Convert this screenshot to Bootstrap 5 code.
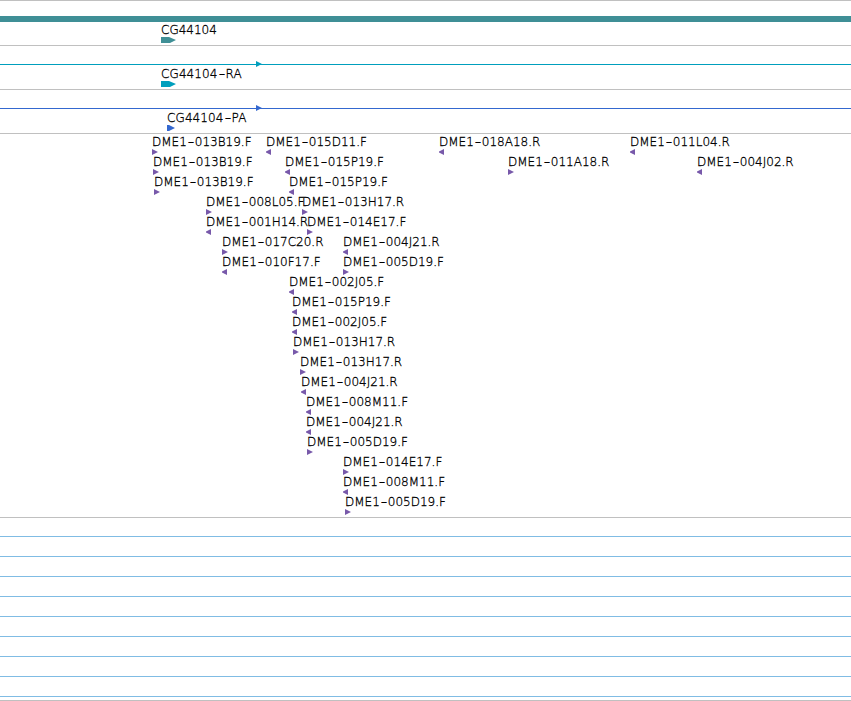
<!DOCTYPE html>
<html lang="en">
<head>
  <meta charset="UTF-8" />
  <meta name="viewport" content="width=device-width, initial-scale=1.0"/>
  <title>CG44104 | Genome Tracks</title>
  <link href="https://cdn.jsdelivr.net/npm/bootstrap@5.3.0/dist/css/bootstrap.min.css" rel="stylesheet"/>
  <style>
    body {
      font-family: "DejaVu Sans", sans-serif;
      font-size: 12px;
      font-weight: 200;
      line-height: 14px;
      color: #000;
      background-color: #fff;
      -webkit-text-stroke: 0.3px #000;
    }
    .track {
      border-top: 1px solid #c0c0c0;
    }
    .track-top {
      height: 45px;
      padding-top: 15px;
    }
    .track-model {
      height: 44px;
      padding-top: 15px;
    }
    .track-model .feature {
      letter-spacing: 0.1px;
    }
    .track-reads {
      height: 384px;
    }
    .track-empty {
      height: 183px;
      padding-top: 18px;
    }
    .gene-bar {
      height: 6px;
      background-color: #3f8f96;
    }
    .span-line {
      height: 5px;
      padding-top: 3px;
    }
    .span-line::before {
      content: "";
      display: block;
      height: 1px;
      background-color: currentColor;
    }
    .span-arrow {
      left: 256px;
      top: 0;
    }
    .lane {
      height: 20px;
    }
    .feature {
      top: 1px;
    }
    .feature svg, .span-arrow svg {
      display: block;
    }
    .dash {
      display: inline-block;
      width: 8px;
      text-align: center;
      transform: scaleX(1.5);
    }
    .grid-line {
      height: 20px;
      border-top: 1px solid #80bce4;
    }
    .teal { color: #3f8f96; }
    .cyan { color: #009fbd; }
    .blue { color: #3468cf; }
    .violet { color: #7859aa; }
  </style>
</head>
<body class="overflow-hidden">
  <div class="track track-top">
    <div class="gene-bar"></div>
    <div class="lane position-relative" data-items="161,CG44104,gene,teal"></div>
  </div>
  <div class="track track-model">
    <div class="span-line position-relative cyan"></div>
    <div class="lane position-relative" data-items="161,CG44104-RA,gene,cyan"></div>
  </div>
  <div class="track track-model">
    <div class="span-line position-relative blue"></div>
    <div class="lane position-relative" data-items="167,CG44104-PA,protein,blue"></div>
  </div>
  <div id="reads" class="track track-reads"></div>
  <div id="emptyTrack" class="track track-empty"></div>
  <div class="track"></div>

  <script src="https://cdn.jsdelivr.net/npm/bootstrap@5.3.0/dist/js/bootstrap.bundle.min.js"></script>
  <script>
    const shapes = {
      gene: '<svg width="15" height="6" fill="currentColor"><path d="M0 0H8L15 3L9 6H0Z"/></svg>',
      protein: '<svg width="8" height="6" fill="currentColor"><path d="M0 0H2L8 3L2 6H0Z"/></svg>',
      fwd: '<svg width="6" height="6" fill="currentColor"><path d="M0 0L6 3L0 6Z"/></svg>',
      rev: '<svg width="5" height="6" fill="currentColor"><path d="M5 0L-1 3L5 6Z"/></svg>'
    };

    // one entry per lane: x, name, direction
    const reads = [
      [[152, "DME1-013B19.F", "fwd"], [266, "DME1-015D11.F", "rev"], [439, "DME1-018A18.R", "rev"], [630, "DME1-011L04.R", "rev"]],
      [[153, "DME1-013B19.F", "fwd"], [285, "DME1-015P19.F", "rev"], [508, "DME1-011A18.R", "fwd"], [697, "DME1-004J02.R", "rev"]],
      [[154, "DME1-013B19.F", "fwd"], [289, "DME1-015P19.F", "rev"]],
      [[206, "DME1-008L05.F", "fwd"], [302, "DME1-013H17.R", "fwd"]],
      [[206, "DME1-001H14.R", "rev"], [307, "DME1-014E17.F", "fwd"]],
      [[222, "DME1-017C20.R", "fwd"], [343, "DME1-004J21.R", "rev"]],
      [[222, "DME1-010F17.F", "rev"], [343, "DME1-005D19.F", "fwd"]],
      [[289, "DME1-002J05.F", "rev"]],
      [[292, "DME1-015P19.F", "rev"]],
      [[292, "DME1-002J05.F", "rev"]],
      [[293, "DME1-013H17.R", "fwd"]],
      [[300, "DME1-013H17.R", "fwd"]],
      [[301, "DME1-004J21.R", "rev"]],
      [[306, "DME1-008M11.F", "rev"]],
      [[306, "DME1-004J21.R", "rev"]],
      [[307, "DME1-005D19.F", "fwd"]],
      [[343, "DME1-014E17.F", "fwd"]],
      [[343, "DME1-008M11.F", "rev"]],
      [[345, "DME1-005D19.F", "fwd"]]
    ];

    function feature(x, name, shape, color) {
      const label = name.replace("-", '<span class="dash">-</span>');
      return `<div class="feature position-absolute text-nowrap" style="left:${x}px">${label}<div class="${color}">${shapes[shape]}</div></div>`;
    }

    document.querySelectorAll("[data-items]").forEach(lane => {
      lane.innerHTML = feature(...lane.dataset.items.split(","));
    });

    document.querySelectorAll(".span-line").forEach(line => {
      line.innerHTML = `<div class="span-arrow position-absolute">${shapes.fwd}</div>`;
    });

    document.getElementById("reads").innerHTML = reads.map(lane =>
      `<div class="lane position-relative">${lane.map(r => feature(r[0], r[1], r[2], "violet")).join("")}</div>`
    ).join("");

    document.getElementById("emptyTrack").innerHTML = '<div class="grid-line"></div>'.repeat(9);
  </script>
</body>
</html>
